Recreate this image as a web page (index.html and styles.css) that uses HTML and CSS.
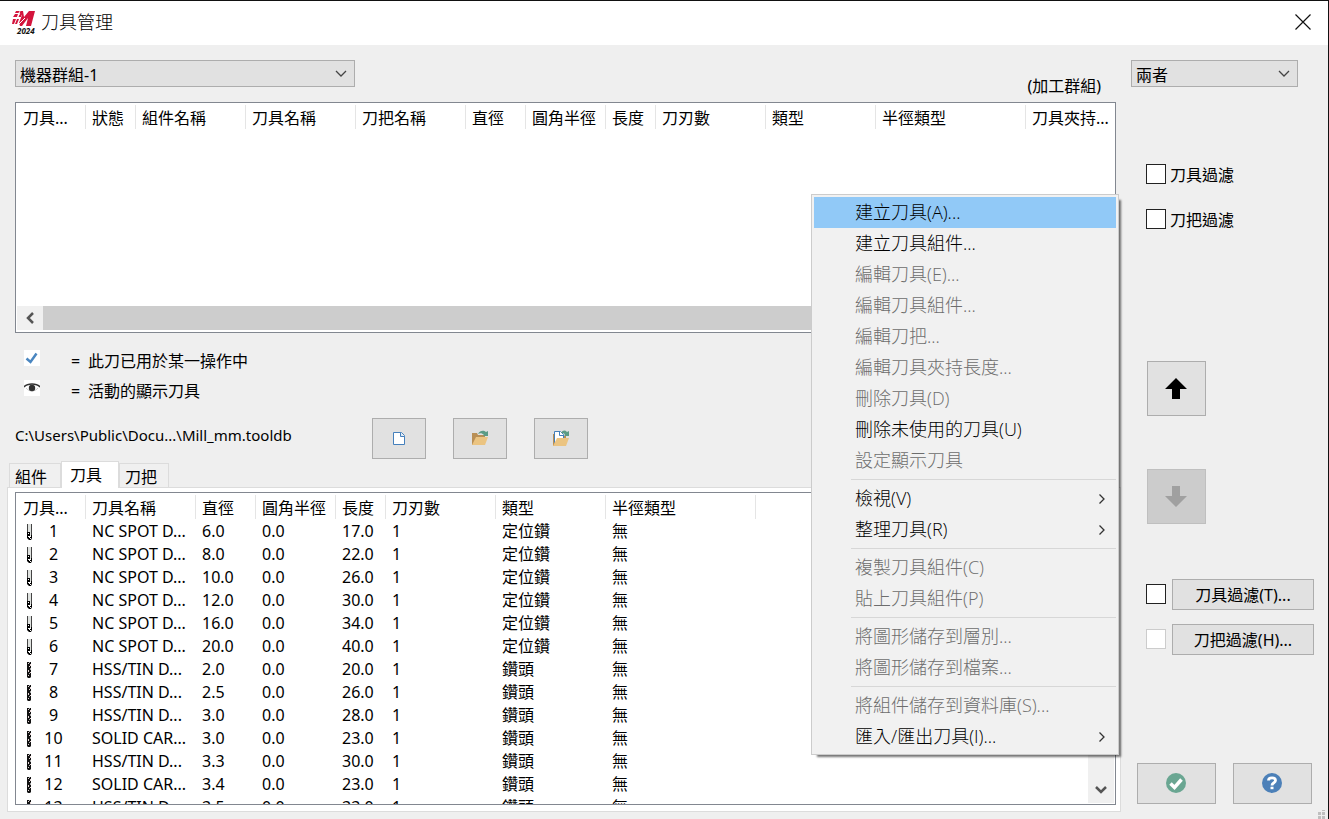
FILE: index.html
```html
<!DOCTYPE html>
<html lang="zh-Hant">
<head>
<meta charset="utf-8">
<title>刀具管理</title>
<link rel="stylesheet" href="styles.css">
</head>
<body>
<svg class="defs" aria-hidden="true">
  <symbol id="chevron" viewBox="0 0 12 8"><path d="M1 1l5 5 5-5" fill="none" stroke="#444" stroke-width="1.3"/></symbol>
  <symbol id="arrow" viewBox="0 0 8 12"><path d="M1.500 1.500l4.500 4.500-4.500 4.500" fill="none" stroke="#333" stroke-width="1.300"/></symbol>
  <symbol id="spot" viewBox="0 0 6 16"><path d="M1 0h3v12H1z" fill="#e0e3e0"/><path d="M0 0h1v14H0zM4 0h1v13H4z" fill="#444"/><path d="M0 8h3v4H2v2h1v-1h1v-2h1v3l-1 2H2l-2-2z" fill="#000"/><path d="M1 9h1v1H1zM1 12h1v1H1zM3 14h1v1H3z" fill="#fff"/></symbol>
  <symbol id="drill" viewBox="0 0 6 16"><path d="M0 0h4v15l-1 1H1l-1-1z" fill="#111"/><path d="M1 1h1v1H1zM3 2h1v2H3zM2 4h1v1H2zM1 8h1v2H1zM3 10h1v1H3zM1 13h1v1H1z" fill="#e6d6d6"/><path d="M2 0h1v1H2zM3 6h1v2H3zM2 11h1v1H2z" fill="#aaa"/></symbol>
</svg>
<div class="window">
  <header class="titlebar">
    <svg class="logo" viewBox="0 0 24 24" aria-hidden="true">
      <path d="M4 1h7l1 6 5-6h6l-4 15h-5l2-8-6 8H8l-1-3 3-8z" fill="#d4143c"/>
      <path d="M4 1h3L6 3H3zM3 4h3L5 7H1zM8 4h2L9 7H6zM1 9h3l-2 5H0zM5 9h2l-2 5H3z" fill="#d4143c"/>
      <path d="M2 7.500h7M7 14l6-6" stroke="#fff" stroke-width="1"/>
      <path d="M8 1l-2 6" stroke="#fff" stroke-width=".8"/>
      <text x="5" y="24" class="logo-year">2024</text>
    </svg>
    <h1 class="title">刀具管理</h1>
    <button class="close" aria-label="關閉"><svg width="16" height="16" viewBox="0 0 16 16"><path d="M.5.5l15 15M15.500.5l-15 15" stroke="#111" stroke-width="1.200"/></svg></button>
  </header>
  <div class="content">
    <main class="left">
      <div class="top-row">
        <div class="dropdown group-select"><select aria-label="機器群組"><option>機器群組-1</option></select><svg class="dd-icon"><use href="#chevron"/></svg></div>
        <span class="group-label">(加工群組)</span>
      </div>
      <section class="list group-list">
        <table class="grid">
          <colgroup><col class="w70"><col class="w50"><col class="w110"><col class="w110"><col class="w110"><col class="w60"><col class="w80"><col class="w50"><col class="w110"><col class="w110"><col class="w150"><col></colgroup>
          <thead><tr><th>刀具...</th><th>狀態</th><th>組件名稱</th><th>刀具名稱</th><th>刀把名稱</th><th>直徑</th><th>圓角半徑</th><th>長度</th><th>刀刃數</th><th>類型</th><th>半徑類型</th><th>刀具夾持...</th></tr></thead>
        </table>
        <div class="hscroll"><button class="hscroll-btn" aria-label="向左捲動"><svg width="10" height="12" viewBox="0 0 10 12"><path d="M8 1L3 6l5 5" fill="none" stroke="#555" stroke-width="2.500"/></svg></button><div class="hthumb"></div></div>
      </section>
      <ul class="legend">
        <li><svg class="legend-icon" viewBox="0 0 16 16"><path d="M2.500 8.500l4 3.500 6-8.500" fill="none" stroke="#4a86c0" stroke-width="2.500"/></svg><span class="eq">=</span><span>此刀已用於某一操作中</span></li>
        <li><svg class="legend-icon" viewBox="0 0 16 16"><path d="M0 7c3-4 13-4 16 0" fill="none" stroke="#333" stroke-width="1.500"/><path d="M2 8c3 4 9 4 12 0" fill="none" stroke="#ccc" stroke-width="1"/><circle cx="8" cy="8" r="3.200" fill="#333"/></svg><span class="eq">=</span><span>活動的顯示刀具</span></li>
      </ul>
      <div class="file-row">
        <span class="path">C:\Users\Public\Docu...\Mill_mm.tooldb</span>
        <button class="btn file-btn" aria-label="新建"><svg width="16" height="16" viewBox="0 0 16 16"><path d="M2.500 1.500h8l3 3v9h-11z" fill="#fff" stroke="#4580bc"/><path d="M9.500 1.500v4h4" fill="#dce8f4" stroke="#4580bc"/></svg></button>
        <button class="btn file-btn" aria-label="開啟"><svg width="18" height="18" viewBox="0 0 18 18"><path d="M1 3h5l1 2h7v10H1z" fill="#b98f55"/><path d="M5 7h12l-3 8H1z" fill="#ebc481"/><path d="M7 4c2-4 6-4 8-2l2-1v5h-5l1-1c-2-2-4-2-6-1z" fill="#5c9c86"/></svg></button>
        <button class="btn file-btn" aria-label="開啟檔案"><svg width="18" height="18" viewBox="0 0 18 18"><path d="M1 4h4v12H1zM9 6h5v3H9z" fill="#b98f55"/><path d="M2.500 1.500h6l3 3v8h-9z" fill="#fff" stroke="#4580bc"/><path d="M7.500 1.500v4h4" fill="none" stroke="#4580bc"/><path d="M5 8h12l-3 8H1z" fill="#ebc481"/><path d="M9 3c2-3 4-3 6-1l2-1v5h-5l1-1c-1-2-2-2-4-2z" fill="#5c9c86"/></svg></button>
      </div>
      <div class="tabs" role="tablist"><button class="tab" role="tab">組件</button><button class="tab active" role="tab" aria-selected="true">刀具</button><button class="tab" role="tab">刀把</button></div>
      <div class="tab-panel">
        <section class="list tool-list">
          <table class="grid">
            <colgroup><col class="w70"><col class="w110"><col class="w60"><col class="w80"><col class="w50"><col class="w110"><col class="w110"><col class="w150"><col></colgroup>
            <thead><tr><th>刀具...</th><th>刀具名稱</th><th>直徑</th><th>圓角半徑</th><th>長度</th><th>刀刃數</th><th>類型</th><th>半徑類型</th><th></th></tr></thead>
            <tbody>
              <tr><td><svg class="tool"><use href="#spot"/></svg><span class="num">1</span></td><td>NC SPOT D...</td><td>6.0</td><td>0.0</td><td>17.0</td><td>1</td><td>定位鑽</td><td>無</td><td></td></tr>
              <tr><td><svg class="tool"><use href="#spot"/></svg><span class="num">2</span></td><td>NC SPOT D...</td><td>8.0</td><td>0.0</td><td>22.0</td><td>1</td><td>定位鑽</td><td>無</td><td></td></tr>
              <tr><td><svg class="tool"><use href="#spot"/></svg><span class="num">3</span></td><td>NC SPOT D...</td><td>10.0</td><td>0.0</td><td>26.0</td><td>1</td><td>定位鑽</td><td>無</td><td></td></tr>
              <tr><td><svg class="tool"><use href="#spot"/></svg><span class="num">4</span></td><td>NC SPOT D...</td><td>12.0</td><td>0.0</td><td>30.0</td><td>1</td><td>定位鑽</td><td>無</td><td></td></tr>
              <tr><td><svg class="tool"><use href="#spot"/></svg><span class="num">5</span></td><td>NC SPOT D...</td><td>16.0</td><td>0.0</td><td>34.0</td><td>1</td><td>定位鑽</td><td>無</td><td></td></tr>
              <tr><td><svg class="tool"><use href="#spot"/></svg><span class="num">6</span></td><td>NC SPOT D...</td><td>20.0</td><td>0.0</td><td>40.0</td><td>1</td><td>定位鑽</td><td>無</td><td></td></tr>
              <tr><td><svg class="tool"><use href="#drill"/></svg><span class="num">7</span></td><td>HSS/TIN D...</td><td>2.0</td><td>0.0</td><td>20.0</td><td>1</td><td>鑽頭</td><td>無</td><td></td></tr>
              <tr><td><svg class="tool"><use href="#drill"/></svg><span class="num">8</span></td><td>HSS/TIN D...</td><td>2.5</td><td>0.0</td><td>26.0</td><td>1</td><td>鑽頭</td><td>無</td><td></td></tr>
              <tr><td><svg class="tool"><use href="#drill"/></svg><span class="num">9</span></td><td>HSS/TIN D...</td><td>3.0</td><td>0.0</td><td>28.0</td><td>1</td><td>鑽頭</td><td>無</td><td></td></tr>
              <tr><td><svg class="tool"><use href="#drill"/></svg><span class="num">10</span></td><td>SOLID CAR...</td><td>3.0</td><td>0.0</td><td>23.0</td><td>1</td><td>鑽頭</td><td>無</td><td></td></tr>
              <tr><td><svg class="tool"><use href="#drill"/></svg><span class="num">11</span></td><td>HSS/TIN D...</td><td>3.3</td><td>0.0</td><td>30.0</td><td>1</td><td>鑽頭</td><td>無</td><td></td></tr>
              <tr><td><svg class="tool"><use href="#drill"/></svg><span class="num">12</span></td><td>SOLID CAR...</td><td>3.4</td><td>0.0</td><td>23.0</td><td>1</td><td>鑽頭</td><td>無</td><td></td></tr>
              <tr><td><svg class="tool"><use href="#drill"/></svg><span class="num">13</span></td><td>HSS/TIN D...</td><td>3.5</td><td>0.0</td><td>33.0</td><td>1</td><td>鑽頭</td><td>無</td><td></td></tr>
            </tbody>
          </table>
          <div class="vscroll"><button class="vscroll-btn" aria-label="向下捲動"><svg width="14" height="10" viewBox="0 0 14 10"><path d="M2 2l5 5 5-5" fill="none" stroke="#555" stroke-width="2.500"/></svg></button></div>
        </section>
      </div>
    </main>
    <aside class="right">
      <div class="dropdown both-select"><select aria-label="顯示"><option>兩者</option></select><svg class="dd-icon"><use href="#chevron"/></svg></div>
      <div class="checks">
        <label class="check-row"><input type="checkbox" class="box"><span>刀具過濾</span></label>
        <label class="check-row"><input type="checkbox" class="box"><span>刀把過濾</span></label>
      </div>
      <div class="moves">
        <button class="btn move" aria-label="上移"><svg width="23" height="21" viewBox="0 0 23 21"><path d="M11 0l11 11h-7v10H7V11H0z" fill="#000"/></svg></button>
        <button class="btn move" aria-label="下移" disabled><svg width="23" height="21" viewBox="0 0 23 21"><path d="M11 21L0 10h7V0h8v10h7z" fill="#a0a0a0"/></svg></button>
      </div>
      <div class="filters">
        <div class="filter-row"><input type="checkbox" class="box" aria-label="啟用刀具過濾"><button class="btn filter">刀具過濾(T)...</button></div>
        <div class="filter-row"><input type="checkbox" class="box" aria-label="啟用刀把過濾" disabled><button class="btn filter">刀把過濾(H)...</button></div>
      </div>
      <div class="actions">
        <button class="btn action" aria-label="確定"><svg width="21" height="21" viewBox="0 0 21 21"><circle cx="10" cy="10" r="10" fill="#6aa692"/><path d="M4.500 10.500l4 4 7-8" fill="none" stroke="#fff" stroke-width="3.500"/></svg></button>
        <button class="btn action" aria-label="說明"><svg width="21" height="21" viewBox="0 0 21 21"><circle cx="10" cy="10" r="10" fill="#4c80b8"/><path d="M6.500 7.500C6.500 4 13.500 4 13.500 7.500c0 2.500-3.500 2-3.500 5" fill="none" stroke="#fff" stroke-width="2.800"/><path d="M8.500 13.700h3v2.500h-3z" fill="#fff"/></svg></button>
      </div>
    </aside>
  </div>
  <svg class="grip" viewBox="0 0 8 9"><path d="M4 0h3v1H4zM0 2h3v3H0zM4 2h3v3H4zM0 6h3v3H0zM4 6h3v3H4z" fill="#bfbfbf"/></svg>
  <div class="menu" role="menu">
    <button role="menuitem" class="item current">建立刀具(A)...</button>
    <button role="menuitem" class="item">建立刀具組件...</button>
    <button role="menuitem" class="item" disabled>編輯刀具(E)...</button>
    <button role="menuitem" class="item" disabled>編輯刀具組件...</button>
    <button role="menuitem" class="item" disabled>編輯刀把...</button>
    <button role="menuitem" class="item" disabled>編輯刀具夾持長度...</button>
    <button role="menuitem" class="item" disabled>刪除刀具(D)</button>
    <button role="menuitem" class="item">刪除未使用的刀具(U)</button>
    <button role="menuitem" class="item" disabled>設定顯示刀具</button>
    <hr class="sep">
    <button role="menuitem" class="item">檢視(V)<svg class="sub"><use href="#arrow"/></svg></button>
    <button role="menuitem" class="item">整理刀具(R)<svg class="sub"><use href="#arrow"/></svg></button>
    <hr class="sep">
    <button role="menuitem" class="item" disabled>複製刀具組件(C)</button>
    <button role="menuitem" class="item" disabled>貼上刀具組件(P)</button>
    <hr class="sep">
    <button role="menuitem" class="item" disabled>將圖形儲存到層別...</button>
    <button role="menuitem" class="item" disabled>將圖形儲存到檔案...</button>
    <hr class="sep">
    <button role="menuitem" class="item" disabled>將組件儲存到資料庫(S)...</button>
    <button role="menuitem" class="item">匯入/匯出刀具(I)...<svg class="sub"><use href="#arrow"/></svg></button>
  </div>
</div>
</body>
</html>
```
FILE: styles.css
```css
* { box-sizing: border-box; }
body {
  margin: 0;
  background: #efefef;
  color: #000;
  font: 16px/22px "Noto Sans", "Noto Sans CJK TC", sans-serif;
}
button, select, input { font: inherit; color: inherit; margin: 0; }
svg { display: block; }
.defs { position: absolute; width: 0; height: 0; }
.window {
  position: relative;
  height: 100vh;
  display: flex;
  flex-direction: column;
  border-top: 1px solid #111;
  border-right: 1px solid #111;
  overflow: hidden;
}

/* title bar */
.titlebar {
  display: flex;
  align-items: center;
  height: 44px;
  padding: 0 17px 2px 12px;
  background: #fff;
  flex: none;
}
.logo { width: 24px; height: 24px; }
.logo-year { font: italic bold 8px "Open Sans", sans-serif; fill: #111; }
.title {
  margin: 0 0 0 5px;
  font: 18px/24px "Open Sans", "Noto Sans CJK TC", sans-serif;
  font-weight: 300;
}
.close { margin-left: auto; padding: 0; border: 0; background: none; }

.content { flex: 1; min-height: 0; display: grid; grid-template-columns: 1fr 207px; }
.left { display: flex; flex-direction: column; min-width: 0; min-height: 0; padding: 15px 0 7px 7px; }
.right { display: flex; flex-direction: column; padding: 15px 0 15px 10px; }

/* drop-downs */
.dropdown { position: relative; height: 27px; }
.dropdown select {
  appearance: none;
  width: 100%;
  height: 100%;
  padding: 2px 4px 0;
  border: 1px solid #adadad;
  border-radius: 0;
  background: #e1e1e1;
}
.dd-icon { position: absolute; right: 8px; top: 10px; width: 12px; height: 8px; pointer-events: none; }
.group-select { width: 340px; }
.both-select { width: 167px; flex: none; }

.top-row { display: flex; justify-content: space-between; height: 42px; padding: 0 20px 0 8px; flex: none; }
.group-label { padding-top: 15px; }

/* lists */
.list { border: 1px solid #828790; background: #fff; overflow: hidden; }
.group-list { flex: none; height: 231px; margin: 0 5px 0 8px; display: flex; flex-direction: column; }
.grid { width: 100%; table-layout: fixed; border-collapse: collapse; }
.w50 { width: 50px; }
.w60 { width: 60px; }
.w70 { width: 70px; }
.w80 { width: 80px; }
.w110 { width: 110px; }
.w150 { width: 150px; }
.grid th, .grid td {
  padding: 0 0 0 6px;
  text-align: left;
  font-weight: 400;
  white-space: nowrap;
  overflow: hidden;
}
.grid th { height: 27px; padding-top: 2px; background: linear-gradient(#e5e5e5, #e5e5e5) right 2px / 1px 24px no-repeat; }
.grid th:last-child { background: none; }
.grid th:first-child { padding-left: 7px; }
.grid td { height: 23px; line-height: 23px; }
.grid td:first-child { display: flex; align-items: center; padding-left: 11px; }
.tool { width: 6px; height: 16px; flex: none; }
.num { width: 41px; text-align: center; }

.hscroll { display: flex; height: 26px; margin-top: auto; padding: 0 1px 2px; }
.hscroll-btn { display: flex; align-items: center; justify-content: center; width: 26px; padding: 0; border: 0; background: #f0f0f0; }
.hthumb { flex: 1; background: #cdcdcd; }

.legend { list-style: none; margin: 13px 0 0 17px; padding: 0; flex: none; }
.legend li { display: flex; align-items: center; height: 30px; }
.legend-icon { width: 16px; height: 16px; margin-bottom: 6px; background: #fff; }
.eq { width: 17px; margin-left: 31px; }

.file-row { display: flex; align-items: center; gap: 27px; margin: 12px 0 0 8px; flex: none; }
.path { width: 330px; padding-bottom: 8px; font-size: 15px; white-space: nowrap; }
.btn {
  display: flex;
  align-items: center;
  justify-content: center;
  padding: 0;
  border: 1px solid #adadad;
  background: #e1e1e1;
}
.file-btn { width: 54px; height: 41px; }

/* tabs */
.tabs { display: flex; align-items: flex-end; height: 26px; margin: 2px 0 0 2px; flex: none; }
.tab { height: 24px; width: 50px; padding: 2px 0 0 5px; border: 1px solid #dcdcdc; border-bottom: 0; background: #f0f0f0; line-height: 20px; text-align: left; }
.tab:first-child { width: 52px; }
.tab.active { width: 58px; height: 27px; padding: 0 0 0 8px; background: #fff; position: relative; z-index: 1; margin-bottom: -1px; }
.tab-panel { flex: 1; min-height: 0; display: flex; padding: 4px 4px 6px 7px; border: 1px solid #dcdcdc; background: #fff; }
.tool-list { flex: 1; display: flex; }
.tool-list .grid { align-self: flex-start; }
.vscroll { flex: none; width: 26px; margin: 1px; display: flex; align-items: flex-end; background: #f0f0f0; }
.vscroll-btn { display: flex; align-items: center; justify-content: center; width: 26px; height: 26px; padding: 0; border: 0; background: none; }

/* right side */
.checks { display: flex; flex-direction: column; gap: 23px; margin: 76px 0 0 15px; }
.check-row { display: flex; align-items: center; gap: 4px; height: 22px; }
.check-row span { padding-top: 2px; }
.box { appearance: none; width: 20px; height: 20px; border: 1px solid #222; background: #fff; flex: none; }
.box:disabled { border-color: #ccc; }
.moves { display: flex; flex-direction: column; gap: 53px; margin: 131px 0 0 16px; }
.move { width: 59px; height: 55px; }
.move:disabled { background: #ccc; border-color: #bfbfbf; }
.filters { display: flex; flex-direction: column; gap: 14px; margin: 55px 14px 0 15px; }
.filter-row { display: flex; align-items: flex-start; gap: 6px; }
.filter-row .box { margin-top: 5px; }
.filter { flex: 1; height: 31px; }
.actions { display: flex; gap: 17px; margin: auto 0 0 6px; }
.action { width: 79px; height: 41px; }
.grip { position: absolute; right: 2px; bottom: 0; width: 8px; height: 9px; }

/* context menu */
.menu {
  position: absolute;
  left: 811px;
  top: 193px;
  width: 308px;
  padding: 2px;
  border: 1px solid #ccc;
  background: #f1f1f1;
  box-shadow: 4px 4px 2px -2px rgba(0, 0, 0, .55);
  font: 18px/28px "Open Sans", "Noto Sans CJK TC", sans-serif;
  font-weight: 300;
}
.item {
  display: flex;
  align-items: center;
  justify-content: space-between;
  width: 100%;
  height: 31px;
  padding: 0 10px 2px 41px;
  border: 0;
  background: none;
  text-align: left;
}
.item:disabled { color: #6d6d6d; }
.item.current { background: #91c9f7; }
.sub { width: 8px; height: 12px; margin-top: 2px; }
.sep { height: 1px; margin: 3px 0 3px 37px; border: 0; background: #d7d7d7; }
```
